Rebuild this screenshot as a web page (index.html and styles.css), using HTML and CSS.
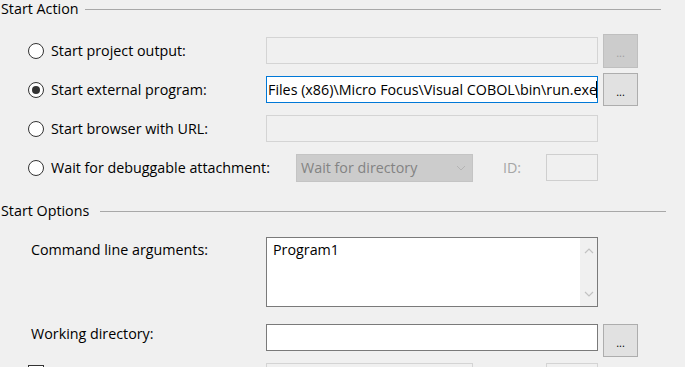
FILE: index.html
```html
<!DOCTYPE html>
<html>
<head>
<meta charset="utf-8">
<link rel="stylesheet" href="styles.css">
</head>
<body>
<div class="page">
  <div class="group-title"><span class="gt-text">Start Action</span><div class="rule r-a"></div></div>

  <div class="row">
    <div class="label"><span class="radio"></span><span>Start project output:</span></div>
    <div class="field field-disabled"></div>
    <div class="btn btn-disabled">...</div>
  </div>

  <div class="row">
    <div class="label"><span class="radio checked"></span><span>Start external program:</span></div>
    <div class="field field-active"><span class="ftext">Files (x86)\Micro Focus\Visual COBOL\bin\run.exe</span><span class="caret"></span></div>
    <div class="btn">...</div>
  </div>

  <div class="row">
    <div class="label"><span class="radio"></span><span>Start browser with URL:</span></div>
    <div class="field field-disabled"></div>
  </div>

  <div class="row">
    <div class="label"><span class="radio"></span><span>Wait for debuggable attachment:</span></div>
    <div class="combo">
      <span class="combo-text">Wait for directory</span>
      <svg class="chev" width="10" height="6" viewBox="0 0 10 6"><path d="M1 1 L5 5 L9 1" fill="none" stroke="#b4b4b4" stroke-width="1"/></svg>
    </div>
    <span class="id-label">ID:</span>
    <div class="idbox"></div>
  </div>

  <div class="group-title gt2"><span class="gt-text">Start Options</span><div class="rule r-b"></div></div>

  <div class="row-cmd">
    <div class="label2 l-cmd">Command line arguments:</div>
    <div class="textarea">
      <div class="ta-text">Program1</div>
      <div class="scroll">
        <svg width="10" height="6" viewBox="0 0 10 6"><path d="M1 5 L5 1 L9 5" fill="none" stroke="#c2c2c2" stroke-width="1.2"/></svg>
        <svg width="10" height="6" viewBox="0 0 10 6"><path d="M1 1 L5 5 L9 1" fill="none" stroke="#c2c2c2" stroke-width="1.2"/></svg>
      </div>
    </div>
  </div>

  <div class="row-wd">
    <div class="label2">Working directory:</div>
    <div class="field field-white"></div>
    <div class="btn btn-tall">...</div>
  </div>

  <div class="row-last">
    <div class="label3"><span class="checkbox"></span></div>
    <div class="field-short"></div>
    <div class="idbox2"></div>
  </div>
</div>
</body>
</html>
```
FILE: styles.css
```css
html, body {
  margin: 0;
  padding: 0;
  background: #f0f0f0;
  width: 685px;
  height: 367px;
  overflow: hidden;
}
.page {
  font-family: "Open Sans", "Noto Sans", sans-serif;
  font-size: 14.3px;
  color: #000;
  display: flex;
  flex-direction: column;
  height: 367px;
  overflow: hidden;
}
.group-title {
  display: flex;
  align-items: center;
  height: 18px;
  flex-shrink: 0;
}
.gt-text {
  padding-left: 1px;
  line-height: 18px;
  white-space: nowrap;
}
.rule {
  height: 1px;
  background: #a8a8a8;
  margin-left: 6px;
}
.r-a { width: 576px; }
.r-b { width: 566px; margin-left: 11px; }
.gt2 { margin-top: 15px; }

.row {
  display: flex;
  align-items: center;
  height: 39px;
  flex-shrink: 0;
}
.group-title + .row { margin-top: 13px; }

.label {
  width: 266px;
  box-sizing: border-box;
  padding-left: 28px;
  display: flex;
  align-items: center;
  gap: 7px;
  white-space: nowrap;
  flex-shrink: 0;
}
.radio {
  width: 16px;
  height: 16px;
  box-sizing: border-box;
  border: 1px solid #333;
  border-radius: 50%;
  background: #fff;
  position: relative;
  flex-shrink: 0;
}
.radio.checked::after {
  content: "";
  position: absolute;
  left: 3px;
  top: 3px;
  width: 8px;
  height: 8px;
  border-radius: 50%;
  background: #333;
}
.field {
  width: 332px;
  height: 27px;
  box-sizing: border-box;
  flex-shrink: 0;
}
.field-disabled {
  border: 1px solid #d4d4d4;
  background: #f0f0f0;
}
.field-active {
  border: 1px solid #0078d7;
  background: #fff;
  display: flex;
  align-items: center;
  padding-left: 1px;
  overflow: hidden;
  white-space: nowrap;
}
.ftext { line-height: 20px; }
.caret {
  width: 1px;
  height: 17px;
  background: #000;
  margin-left: -1px;
}
.field-white {
  border: 1px solid #7a7a7a;
  background: #fff;
}
.btn {
  width: 35px;
  height: 33px;
  box-sizing: border-box;
  margin-left: 5px;
  background: #e1e1e1;
  border: 1px solid #adadad;
  display: flex;
  align-items: center;
  justify-content: center;
  font-size: 11px;
  padding-top: 3px;
  color: #000;
  flex-shrink: 0;
}
.btn-disabled {
  background: #cccccc;
  border-color: #bfbfbf;
  color: #a0a0a0;
  height: 34px;
}
.btn-tall { height: 33px; }

.combo {
  margin-left: 30px;
  width: 177px;
  height: 28px;
  box-sizing: border-box;
  background: #cccccc;
  border: 1px solid #c4c4c4;
  display: flex;
  align-items: center;
  justify-content: space-between;
  padding: 0 6px 0 4px;
  color: #838383;
  white-space: nowrap;
}
.chev { display: block; }
.id-label {
  margin-left: 30px;
  width: 43px;
  color: #a6a6a6;
}
.idbox {
  width: 52px;
  height: 27px;
  box-sizing: border-box;
  border: 1px solid #cfcfcf;
  background: #f0f0f0;
}

.row-cmd {
  display: flex;
  margin-top: 17px;
  flex-shrink: 0;
}
.label2 {
  width: 266px;
  box-sizing: border-box;
  padding-left: 31px;
  line-height: 20px;
  white-space: nowrap;
  flex-shrink: 0;
}
.l-cmd { padding-top: 3px; }
.textarea {
  width: 332px;
  height: 70px;
  box-sizing: border-box;
  border: 1px solid #7a7a7a;
  background: #fff;
  display: flex;
  justify-content: space-between;
}
.ta-text {
  padding: 2px 0 0 6px;
  line-height: 20px;
}
.scroll {
  width: 17px;
  background: #f0f0f0;
  display: flex;
  flex-direction: column;
  justify-content: space-between;
  align-items: center;
  padding: 10px 0 9px;
}
.scroll svg { display: block; }

.row-wd {
  display: flex;
  align-items: flex-start;
  margin-top: 17px;
  height: 33px;
  flex-shrink: 0;
}

.row-last {
  display: flex;
  align-items: flex-start;
  margin-top: 6px;
  height: 4px;
  flex-shrink: 0;
}
.label3 {
  width: 266px;
  box-sizing: border-box;
  padding-left: 28px;
  padding-top: 2px;
  flex-shrink: 0;
}
.checkbox {
  display: block;
  width: 16px;
  height: 16px;
  box-sizing: border-box;
  border: 1px solid #333;
  background: #fff;
}
.field-short {
  width: 207px;
  height: 27px;
  box-sizing: border-box;
  border: 1px solid #d4d4d4;
  background: #f0f0f0;
  flex-shrink: 0;
}
.idbox2 {
  margin-left: 73px;
  width: 52px;
  height: 27px;
  box-sizing: border-box;
  border: 1px solid #d4d4d4;
  background: #f0f0f0;
  flex-shrink: 0;
}
```
